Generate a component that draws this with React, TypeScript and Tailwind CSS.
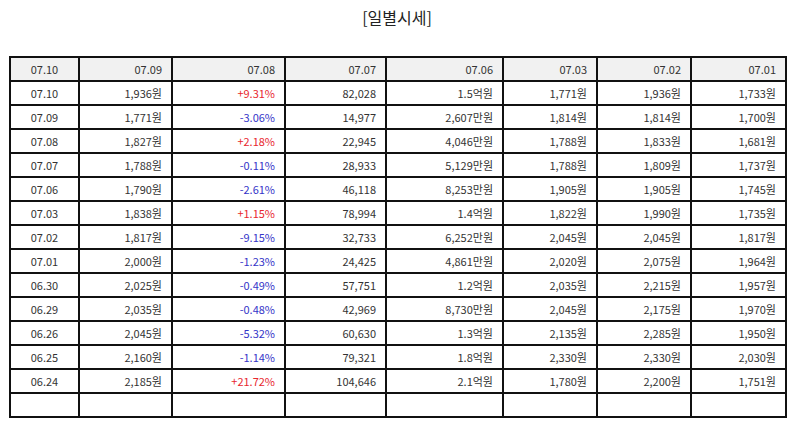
const headers = ["07.10", "07.09", "07.08", "07.07", "07.06", "07.03", "07.02", "07.01"];

type Row = [string, string, string, string, string, string, string, string];

const rows: Row[] = [
  ["07.10", "1,936원", "+9.31%", "82,028", "1.5억원", "1,771원", "1,936원", "1,733원"],
  ["07.09", "1,771원", "-3.06%", "14,977", "2,607만원", "1,814원", "1,814원", "1,700원"],
  ["07.08", "1,827원", "+2.18%", "22,945", "4,046만원", "1,788원", "1,833원", "1,681원"],
  ["07.07", "1,788원", "-0.11%", "28,933", "5,129만원", "1,788원", "1,809원", "1,737원"],
  ["07.06", "1,790원", "-2.61%", "46,118", "8,253만원", "1,905원", "1,905원", "1,745원"],
  ["07.03", "1,838원", "+1.15%", "78,994", "1.4억원", "1,822원", "1,990원", "1,735원"],
  ["07.02", "1,817원", "-9.15%", "32,733", "6,252만원", "2,045원", "2,045원", "1,817원"],
  ["07.01", "2,000원", "-1.23%", "24,425", "4,861만원", "2,020원", "2,075원", "1,964원"],
  ["06.30", "2,025원", "-0.49%", "57,751", "1.2억원", "2,035원", "2,215원", "1,957원"],
  ["06.29", "2,035원", "-0.48%", "42,969", "8,730만원", "2,045원", "2,175원", "1,970원"],
  ["06.26", "2,045원", "-5.32%", "60,630", "1.3억원", "2,135원", "2,285원", "1,950원"],
  ["06.25", "2,160원", "-1.14%", "79,321", "1.8억원", "2,330원", "2,330원", "2,030원"],
  ["06.24", "2,185원", "+21.72%", "104,646", "2.1억원", "1,780원", "2,200원", "1,751원"],
];

const widths = ["w-[69px]", "w-[93px]", "w-[113px]", "w-[101px]", "w-[117px]", "w-[94px]", "w-[94px]", "w-[95px]"];

function changeColor(v: string) {
  if (v.startsWith("+")) return "text-[#e8272e]";
  if (v.startsWith("-")) return "text-[#3535c8]";
  return "";
}

export default function App() {
  return (
    <div className="w-[794px] h-[425px] bg-white text-[#333] font-['Noto_Sans_CJK_KR','Noto_Sans',sans-serif]">
      <h1 className="pt-[5px] h-[56px] text-center text-[16px] leading-[24px] font-normal text-[#222]">[일별시세]</h1>
      <div className="px-[9px]">
        <table className="w-[777px] table-fixed border-collapse text-[11px]">
          <colgroup>
            {widths.map((w, i) => (
              <col key={i} className={w} />
            ))}
          </colgroup>
          <thead>
            <tr className="h-[24px] bg-[#f1f1f1]">
              {headers.map((h, i) => (
                <th
                  key={i}
                  className={`border-2 border-[#111] font-normal px-[9px] py-0 ${i === 0 ? "text-center" : "text-right"}`}
                >
                  {h}
                </th>
              ))}
            </tr>
          </thead>
          <tbody>
            {rows.map((r, ri) => (
              <tr key={ri} className="h-[24px]">
                {r.map((c, ci) => (
                  <td
                    key={ci}
                    className={`border-2 border-[#111] px-[9px] py-0 ${ci === 0 ? "text-center" : "text-right"} ${ci === 2 ? changeColor(c) : ""}`}
                  >
                    {c}
                  </td>
                ))}
              </tr>
            ))}
            <tr className="h-[24px]">
              {headers.map((_, i) => (
                <td key={i} className="border-2 border-[#111]" />
              ))}
            </tr>
          </tbody>
        </table>
      </div>
    </div>
  );
}
